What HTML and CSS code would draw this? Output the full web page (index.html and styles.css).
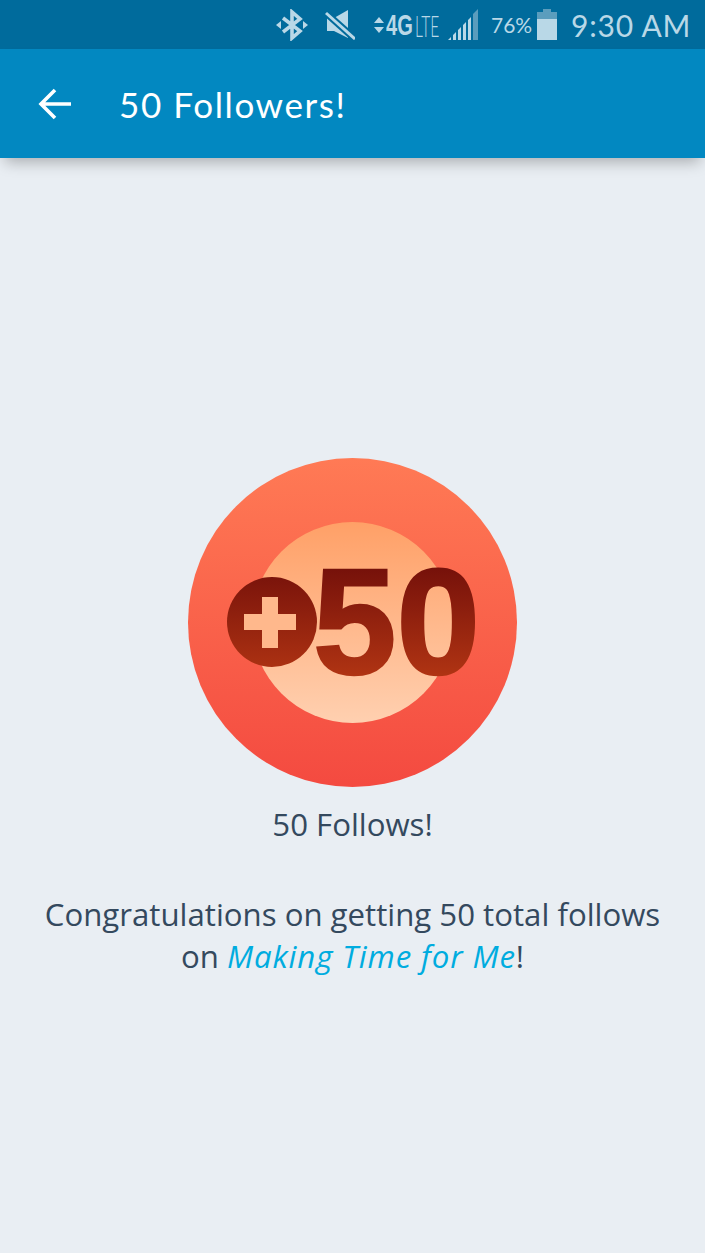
FILE: index.html
```html
<!DOCTYPE html>
<html lang="en">
<head>
    <meta charset="UTF-8">
    <meta name="viewport" content="width=device-width, initial-scale=1.0">
    <title>50 Followers!</title>
    <link rel="stylesheet" href="styles.css">
</head>
<body>
    <!-- Status bar -->
    <div class="status-bar">
        <svg class="icon-bluetooth" width="32" height="32" viewBox="0 0 32 32">
            <path d="M7 9 L24 22 L16 29 L16 3 L24 10 L7 23" fill="none" stroke="#b9d8e7" stroke-width="3.6"/>
            <path d="M0 16 L5 12 V20 Z M32 16 L27 12 V20 Z" fill="#b9d8e7"/>
        </svg>
        <svg class="icon-mute" width="30" height="30" viewBox="0 0 30 30">
            <path d="M2 8 H9 L23 0 V28 L9 21 H2 Z" fill="#b9d8e7"/>
            <path d="M1 3 L30 29" stroke="#006b9c" stroke-width="7"/>
            <path d="M1 3 L30 29" stroke="#b9d8e7" stroke-width="3"/>
        </svg>
        <div class="network">
            <svg width="10" height="16" viewBox="0 0 10 16">
                <path d="M5 0 L10 6 H0 Z M5 16 L10 10 H0 Z" fill="#b9d8e7"/>
            </svg>
            <span class="net-4g">4G</span><span class="net-lte">LTE</span>
        </div>
        <svg class="icon-signal" width="30" height="32" viewBox="0 0 30 32">
            <path d="M0 31 H3 V28 Z" fill="#b9d8e7"/>
            <path d="M5 31 H8 V23 L5 26 Z M10 31 H13 V18 L10 21 Z M15 31 H18 V13 L15 16 Z M20 31 H23 V8 L20 11 Z" fill="#b9d8e7"/>
            <path d="M25 31 H30 V0 L25 5 Z" fill="#5b9dbd"/>
        </svg>
        <span class="battery-text">76%</span>
        <svg class="icon-battery" width="20" height="31" viewBox="0 0 20 31">
            <path d="M6 0 H14 V3 H20 V10 H0 V3 H6 Z" fill="#5b9dbd"/>
            <rect y="10" width="20" height="21" fill="#b9d8e7"/>
        </svg>
        <span class="clock">9:30 AM</span>
    </div>

    <!-- Toolbar -->
    <header class="toolbar">
        <svg class="back" width="34" height="32" viewBox="0 0 34 32">
            <path d="M2 16 H33 M17 2 L3 16 L17 30" fill="none" stroke="#fff" stroke-width="3.6"/>
        </svg>
        <h1>50 Followers!</h1>
    </header>

    <main class="content">
        <svg class="badge" width="329" height="329" viewBox="0 0 329 329">
            <defs>
                <linearGradient id="outerFill" x1="0" y1="0" x2="0" y2="1">
                    <stop offset="0" stop-color="#ff7a55"/>
                    <stop offset="1" stop-color="#f44a40"/>
                </linearGradient>
                <linearGradient id="innerFill" x1="0" y1="0" x2="0" y2="1">
                    <stop offset="0" stop-color="#ffa067"/>
                    <stop offset="1" stop-color="#ffd0b0"/>
                </linearGradient>
                <linearGradient id="darkFill" gradientUnits="userSpaceOnUse" x1="0" y1="106" x2="0" y2="222">
                    <stop offset="0" stop-color="#74100a"/>
                    <stop offset="1" stop-color="#b23513"/>
                </linearGradient>
            </defs>
            <circle cx="164.500" cy="164.500" r="164.500" fill="url(#outerFill)"/>
            <circle cx="164.500" cy="164.500" r="100.500" fill="url(#innerFill)"/>
            <circle cx="84" cy="164" r="45" fill="url(#darkFill)"/>
            <path d="M74 139 H90 V156 H108 V172 H90 V190 H74 V172 H56 V156 H74 Z" fill="#ffb88c"/>
            <text class="badge-num" x="125" y="216" fill="url(#darkFill)" stroke="url(#darkFill)">50</text>
        </svg>
        <p class="badge-name">50 Follows!</p>
        <p class="badge-desc">Congratulations on getting 50 total follows on <a href="#">Making Time for Me</a>!</p>
    </main>
</body>
</html>
```

FILE: styles.css
```css
html, body {
    margin: 0;
    height: 100%;
}

body {
    display: flex;
    flex-direction: column;
    background: #e9eef3;
    font-family: 'Open Sans', sans-serif;
    overflow: hidden;
}

.status-bar {
    height: 49px;
    flex: none;
    display: flex;
    align-items: center;
    padding-left: 276px;
    background: #006b9c;
    color: #b9d8e7;
}

.icon-bluetooth {
    margin-right: 17px;
}

.icon-mute {
    margin-right: 19px;
}

.network {
    display: flex;
    align-items: center;
    width: 74px;
}

.network svg {
    flex: none;
    margin-right: 2px;
}

.net-4g {
    flex: none;
    width: 29px;
    font: bold 30px 'Liberation Sans', sans-serif;
    transform: scaleX(.67);
    transform-origin: left;
}

.net-lte {
    flex: none;
    width: 24px;
    font: 300 30px 'Lato', sans-serif;
    transform: scaleX(.52);
    transform-origin: left;
}

.icon-signal {
    margin-right: 13px;
}

.battery-text {
    width: 46px;
    font: 400 21px 'Lato', sans-serif;
}

.clock {
    margin-left: 14px;
    font: 400 30px 'Lato', sans-serif;
    letter-spacing: .8px;
    white-space: nowrap;
}

.toolbar {
    height: 109px;
    flex: none;
    display: flex;
    align-items: center;
    padding-left: 38px;
    background: #0288c1;
    box-shadow: 0 9px 14px -5px rgba(0, 0, 0, 0.28);
    position: relative;
}

.back {
    margin-right: 47px;
}

.toolbar h1 {
    margin: 0;
    color: #fff;
    font: 400 35px 'Lato', sans-serif;
    letter-spacing: 1.6px;
}

.content {
    padding: 300px 40px 0;
    display: flex;
    flex-direction: column;
    align-items: center;
    text-align: center;
    color: #34495e;
    font-size: 31.200px;
    line-height: 42px;
}

.badge {
    display: block;
}

.badge-num {
    font: bold 150px 'Liberation Sans', sans-serif;
    stroke-width: 2.500px;
}

.badge-name {
    margin: 16px 0 0;
}

.badge-desc {
    margin: 48px 0 0;
}

.badge-desc a {
    color: #00acdf;
    font-style: italic;
    letter-spacing: .9px;
    text-decoration: none;
}
```
